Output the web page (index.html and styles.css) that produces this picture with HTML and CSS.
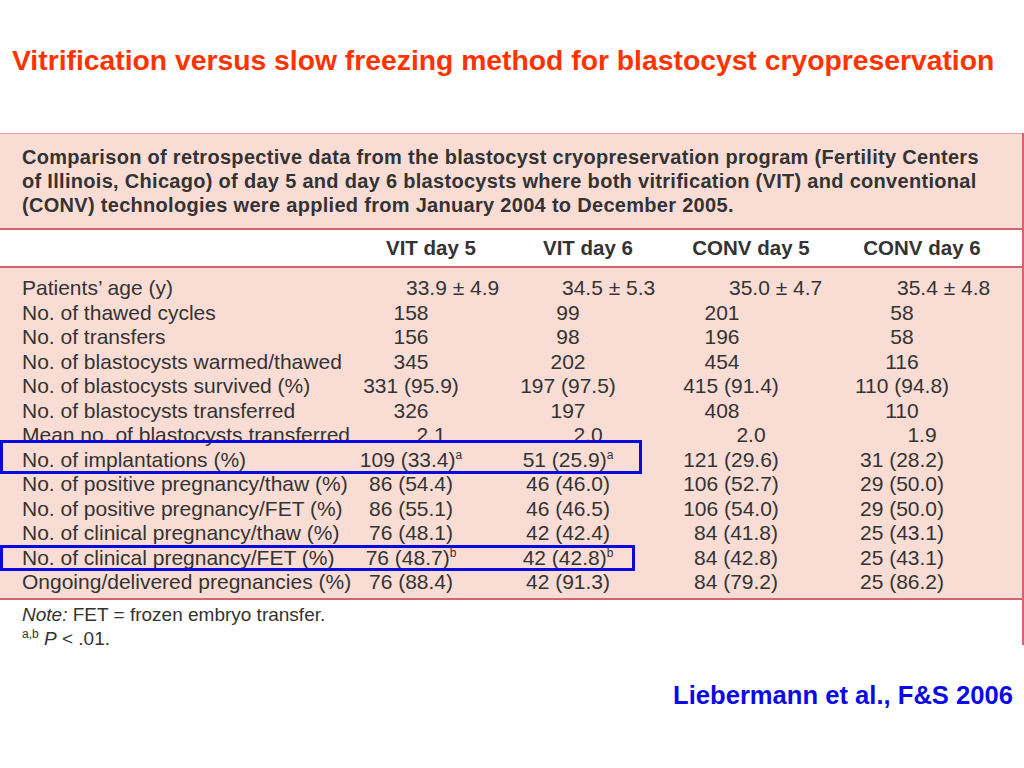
FILE: index.html
```html
<!DOCTYPE html>
<html lang="en">
<head>
<meta charset="utf-8">
<title>Vitrification versus slow freezing</title>
<link rel="stylesheet" href="styles.css">
</head>
<body>
<div class="slide">
  <h1 class="title">Vitrification versus slow freezing method for blastocyst cryopreservation</h1>

  <div class="table-wrap">
    <div class="caption">Comparison of retrospective data from the blastocyst cryopreservation program (Fertility Centers<br>of Illinois, Chicago) of day 5 and day 6 blastocysts where both vitrification (VIT) and conventional<br>(CONV) technologies were applied from January 2004 to December 2005.</div>

    <div class="row head">
      <div class="label"></div>
      <div class="val">VIT day 5</div>
      <div class="val">VIT day 6</div>
      <div class="val">CONV day 5</div>
      <div class="val">CONV day 6</div>
    </div>

    <div class="body">
      <div class="row age">
        <div class="label">Patients’ age (y)</div>
        <div class="val">33.9 ± 4.9</div>
        <div class="val">34.5 ± 5.3</div>
        <div class="val">35.0 ± 4.7</div>
        <div class="val">35.4 ± 4.8</div>
      </div>
      <div class="row">
        <div class="label">No. of thawed cycles</div>
        <div class="val">158</div>
        <div class="val">99</div>
        <div class="val shift-l">201</div>
        <div class="val">58</div>
      </div>
      <div class="row">
        <div class="label">No. of transfers</div>
        <div class="val">156</div>
        <div class="val">98</div>
        <div class="val shift-l">196</div>
        <div class="val">58</div>
      </div>
      <div class="row">
        <div class="label">No. of blastocysts warmed/thawed</div>
        <div class="val">345</div>
        <div class="val">202</div>
        <div class="val shift-l">454</div>
        <div class="val">116</div>
      </div>
      <div class="row">
        <div class="label">No. of blastocysts survived (%)</div>
        <div class="val">331 (95.9)</div>
        <div class="val">197 (97.5)</div>
        <div class="val">415 (91.4)</div>
        <div class="val">110 (94.8)</div>
      </div>
      <div class="row">
        <div class="label">No. of blastocysts transferred</div>
        <div class="val">326</div>
        <div class="val">197</div>
        <div class="val shift-l">408</div>
        <div class="val">110</div>
      </div>
      <div class="row mean">
        <div class="label">Mean no. of blastocysts transferred</div>
        <div class="val">2.1</div>
        <div class="val">2.0</div>
        <div class="val">2.0</div>
        <div class="val">1.9</div>
      </div>
      <div class="row">
        <div class="label">No. of implantations (%)</div>
        <div class="val">109 (33.4)<sup class="fn">a</sup></div>
        <div class="val">51 (25.9)<sup class="fn">a</sup></div>
        <div class="val">121 (29.6)</div>
        <div class="val">31 (28.2)</div>
      </div>
      <div class="row">
        <div class="label">No. of positive pregnancy/thaw (%)</div>
        <div class="val">86 (54.4)</div>
        <div class="val">46 (46.0)</div>
        <div class="val">106 (52.7)</div>
        <div class="val">29 (50.0)</div>
      </div>
      <div class="row">
        <div class="label">No. of positive pregnancy/FET (%)</div>
        <div class="val">86 (55.1)</div>
        <div class="val">46 (46.5)</div>
        <div class="val">106 (54.0)</div>
        <div class="val">29 (50.0)</div>
      </div>
      <div class="row">
        <div class="label">No. of clinical pregnancy/thaw (%)</div>
        <div class="val">76 (48.1)</div>
        <div class="val">42 (42.4)</div>
        <div class="val shift-r">84 (41.8)</div>
        <div class="val">25 (43.1)</div>
      </div>
      <div class="row">
        <div class="label">No. of clinical pregnancy/FET (%)</div>
        <div class="val">76 (48.7)<sup class="fn">b</sup></div>
        <div class="val">42 (42.8)<sup class="fn">b</sup></div>
        <div class="val shift-r">84 (42.8)</div>
        <div class="val">25 (43.1)</div>
      </div>
      <div class="row">
        <div class="label">Ongoing/delivered pregnancies (%)</div>
        <div class="val">76 (88.4)</div>
        <div class="val">42 (91.3)</div>
        <div class="val shift-r">84 (79.2)</div>
        <div class="val">25 (86.2)</div>
      </div>
    </div>

    <div class="notes">
      <div class="note"><i>Note:</i> FET = frozen embryo transfer.</div>
      <div class="note"><sup class="fn-note">a,b</sup> <i>P</i> &lt; .01.</div>
    </div>

    <div class="highlight hl-1"></div>
    <div class="highlight hl-2"></div>
  </div>

  <div class="cite">Liebermann et al., F&amp;S 2006</div>
</div>
</body>
</html>
```

FILE: styles.css
```css
html, body {
  margin: 0;
  padding: 0;
  background: #ffffff;
}

.slide {
  width: 1024px;
  height: 768px;
  position: relative;
  font-family: "Liberation Sans", Arial, sans-serif;
  overflow: hidden;
}

.title {
  margin: 0;
  padding: 43px 0 0 12px;
  height: 133px;
  box-sizing: border-box;
  font-size: 28.3px;
  line-height: 34px;
  font-weight: bold;
  color: #ff3300;
  white-space: nowrap;
}

.table-wrap {
  position: relative;
  width: 1022px;
  border-right: 2px solid #d4646e;
  color: #333333;
}

.caption {
  background: #f9ddd5;
  border-top: 1px solid #e4a0a0;
  border-bottom: 2px solid #d4646e;
  padding: 11px 0 11px 22px;
  font-size: 20px;
  letter-spacing: 0.3px;
  font-weight: bold;
  line-height: 24px;
  white-space: nowrap;
}

.row {
  display: grid;
  grid-template-columns: 312px 154px 160px 166px 176px;
  padding-left: 22px;
  white-space: nowrap;
}

.label {
  text-align: left;
}

.val {
  text-align: center;
}

.head {
  background: #ffffff;
  height: 36px;
  line-height: 36px;
  font-size: 20.5px;
  font-weight: bold;
  border-bottom: 2px solid #d4646e;
}

.head .val {
  padding-left: 40px;
}

.body {
  background: #f9ddd5;
  padding: 8px 0 3px;
  border-bottom: 2px solid #d4646e;
  font-size: 21px;
  line-height: 24.5px;
}

.body .row {
  height: 24.5px;
}

.age .val {
  text-align: left;
}

.age .val:nth-child(2) {
  padding-left: 72px;
}

.age .val:nth-child(3) {
  padding-left: 74px;
}

.age .val:nth-child(4) {
  padding-left: 81px;
}

.age .val:nth-child(5) {
  padding-left: 83px;
}

.mean .val {
  padding-left: 40px;
}

.shift-l {
  padding-right: 18px;
}

.shift-r {
  padding-left: 10px;
}

.fn {
  font-size: 12px;
  line-height: 0;
  vertical-align: 8px;
}

.notes {
  padding: 3px 0 0 22px;
  height: 45px;
  box-sizing: border-box;
  font-size: 19px;
  line-height: 24px;
}

.fn-note {
  font-size: 12px;
  line-height: 0;
  vertical-align: 7px;
}

.highlight {
  position: absolute;
  left: 0;
  border: 3px solid #0a0ae0;
  box-sizing: border-box;
}

.hl-1 {
  top: 307px;
  width: 642px;
  height: 34px;
}

.hl-2 {
  top: 412px;
  width: 635px;
  height: 26px;
}

.cite {
  position: absolute;
  right: 11px;
  top: 679px;
  font-size: 25.6px;
  line-height: 32px;
  font-weight: bold;
  color: #0a0ae6;
}
```
